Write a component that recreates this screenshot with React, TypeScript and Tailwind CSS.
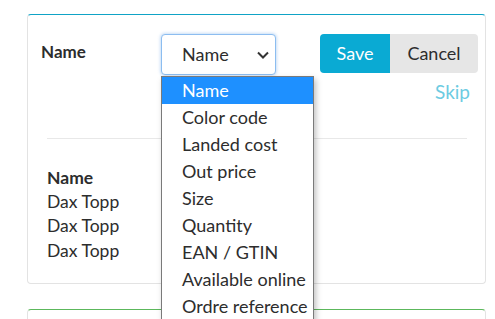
const options = [
  'Name',
  'Color code',
  'Landed cost',
  'Out price',
  'Size',
  'Quantity',
  'EAN / GTIN',
  'Available online',
  'Ordre reference',
];

const rows = ['Dax Topp', 'Dax Topp', 'Dax Topp'];

function SelectBox() {
  return (
    <div className="relative">
      <div className="flex h-[41px] w-[115px] items-center justify-between rounded-[4px] border border-[#8cbdf0] bg-white pl-[20px] pr-[6px] text-[18px] text-[#2d2d2d] shadow-[0_0_3px_1px_rgba(100,160,230,0.35)]">
        <span>Name</span>
        <svg width="12" height="8" viewBox="0 0 12 8" fill="none">
          <path d="M1 1.5l5 5 5-5" stroke="#333" strokeWidth="2" />
        </svg>
      </div>
      <ul className="absolute left-0 top-[42px] z-10 w-[153px] border border-[#7a7a7a] bg-white shadow-[2px_3px_6px_rgba(0,0,0,0.25)]">
        {options.map((o, i) => (
          <li
            key={o}
            className={
              i === 0
                ? 'flex h-[27px] items-center bg-[#1e90ff] pl-[20px] text-[18px] text-white'
                : 'flex h-[27px] items-center pl-[20px] text-[18px] text-[#2d2d2d]'
            }
          >
            {o}
          </li>
        ))}
      </ul>
    </div>
  );
}

export default function App() {
  return (
    <div
      className="h-[319px] overflow-hidden bg-white px-[27px] pt-[14px] text-[#2d2d2d]"
      style={{ fontFamily: 'Lato, "Open Sans", sans-serif' }}
    >
      <div className="h-[270px] w-[459px] rounded-[4px] border border-[#e3e3e3] border-t-[#0fa3c6]">
        <div className="flex pl-[13px] pr-[6px] pt-[19px]">
          <div className="w-[120px] pt-[5px] text-[17px] font-bold">Name</div>
          <SelectBox />
          <div className="ml-[44px] flex flex-col items-end">
            <div className="flex">
              <button className="h-[39px] w-[70px] rounded-l-[4px] bg-[#0aaad3] text-[18px] text-white">
                Save
              </button>
              <button className="h-[39px] w-[88px] rounded-r-[4px] bg-[#e6e6e6] text-[18px] text-[#2d2d2d]">
                Cancel
              </button>
            </div>
            <span className="mr-[8px] mt-[5px] text-[19px] text-[#6ccbe2]">Skip</span>
          </div>
        </div>
        <div className="mx-[18px] ml-[19px] mt-[31px] border-t border-[#e8e8e8] pt-[27px] text-[17.5px]">
          <div className="font-bold leading-[24px]">Name</div>
          {rows.map((r, i) => (
            <div key={i} className="leading-[24.5px]">
              {r}
            </div>
          ))}
        </div>
      </div>
      <div className="mt-[25px] h-[40px] w-[459px] rounded-[4px] border border-[#e3e3e3] border-t-[#5cb85c]" />
    </div>
  );
}
